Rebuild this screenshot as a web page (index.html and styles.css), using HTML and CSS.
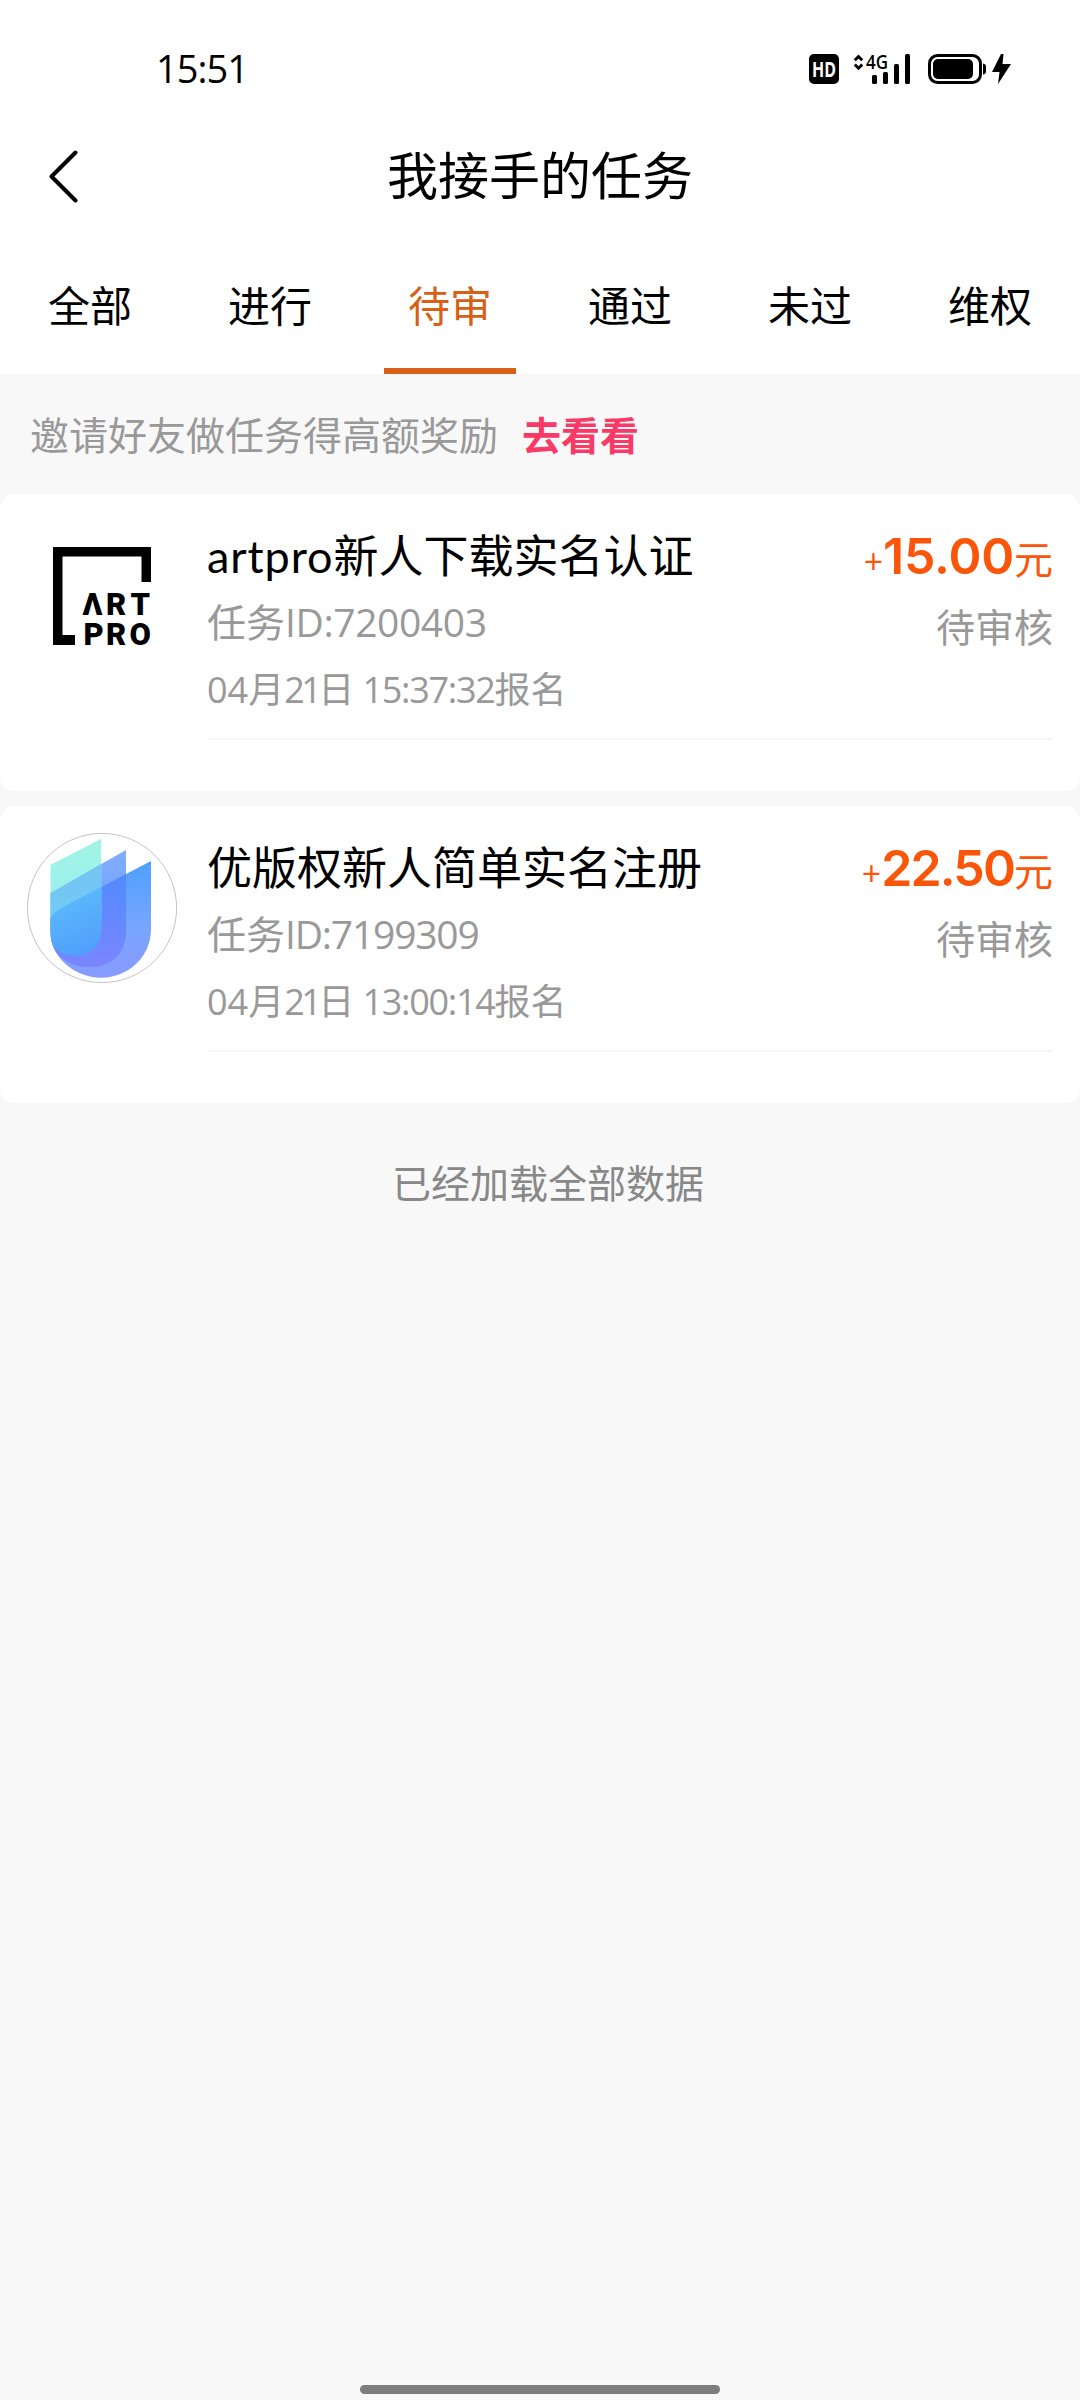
FILE: index.html
```html
<!DOCTYPE html>
<html lang="zh-CN">
<head>
<meta charset="utf-8">
<title>我接手的任务</title>
<link rel="stylesheet" href="styles.css">
</head>
<body>
<div class="screen">
  <header class="header">
    <div class="status">
      <span class="clock">15:51</span>
      <svg class="status-icons" width="204" height="52" viewBox="808 43 204 52" aria-hidden="true">
        <rect x="809" y="54" width="30" height="30" rx="5"/>
        <text class="hd" x="824" y="76.500" text-anchor="middle" textLength="24" lengthAdjust="spacingAndGlyphs">HD</text>
        <path class="line" d="M854.8 60.2l3.700-3.700 3.700 3.700M854.800 64.500l3.700 3.700 3.700-3.700"/>
        <text class="net" x="866" y="68.500" textLength="22" lengthAdjust="spacingAndGlyphs">4G</text>
        <rect x="872" y="75" width="5" height="9" rx="1.500"/>
        <rect x="883" y="72" width="5" height="12" rx="1.500"/>
        <rect x="894" y="64" width="5" height="20" rx="1.500"/>
        <rect x="905" y="54" width="5" height="30" rx="1.500"/>
        <rect class="line" x="929.500" y="55.500" width="51" height="27" rx="8"/>
        <rect x="933" y="59" width="40" height="20" rx="5"/>
        <path d="M983 63.500q3 .5 3 3v5q0 2.500-3 3z"/>
        <path d="M1001 54l-9 18h7.500l-1.500 12 13-20h-8.500l1-10z"/>
      </svg>
    </div>
    <div class="nav">
      <svg class="back" width="32" height="54" viewBox="0 0 32 54" aria-hidden="true"><path d="M28.500 3.500L4.500 27.500l24 24"/></svg>
      <h1 class="title">我接手的任务</h1>
    </div>
    <nav class="tabs">
      <a class="tab">全部</a>
      <a class="tab">进行</a>
      <a class="tab active">待审</a>
      <a class="tab">通过</a>
      <a class="tab">未过</a>
      <a class="tab">维权</a>
    </nav>
  </header>

  <div class="notice"><span>邀请好友做任务得高额奖励</span><a class="notice-link">去看看</a></div>

  <main class="list">
    <article class="card">
      <svg class="avatar" width="150" height="150" viewBox="0 0 150 150">
        <path d="M26 26h98v35h-9.500V35.500h-79V114H48v10H26z"/>
        <text class="logo-text" x="55.500 79 103.500" y="93.500">ΛRT</text>
        <text class="logo-text" x="56.500 79 102.500" y="123.500">PRO</text>
      </svg>
      <div class="body">
        <div class="info">
          <h2 class="name"><span class="latin">artpro</span>新人下载实名认证</h2>
          <p class="task-id">任务<span class="num id-a">ID:7200403</span></p>
          <p class="date"><span class="num">04</span>月<span class="num day">21</span>日 <span class="num time">15:37:32</span>报名</p>
        </div>
        <div class="reward">
          <p class="price"><span class="plus">+</span><b class="amount">15.00</b>元</p>
          <p class="state">待审核</p>
        </div>
      </div>
    </article>

    <article class="card">
      <svg class="avatar" width="150" height="150" viewBox="0 0 150 150" aria-hidden="true">
        <defs>
          <linearGradient id="outer" x1="0.600" y1="0" x2="0.700" y2="1"><stop offset="0" stop-color="#4c9fff"/><stop offset="0.550" stop-color="#76a6ff"/><stop offset="1" stop-color="#8b98ff"/></linearGradient>
          <linearGradient id="middle" x1="0" y1="0" x2="0" y2="1"><stop offset="0" stop-color="#7faeff"/><stop offset="1" stop-color="#789aff"/></linearGradient>
          <linearGradient id="core" x1="0" y1="0" x2="0" y2="1"><stop offset="0" stop-color="#4b8cff"/><stop offset="1" stop-color="#7d85ff"/></linearGradient>
          <linearGradient id="mint" x1="0" y1="0" x2="0" y2="1"><stop offset="0" stop-color="#a2f5e4"/><stop offset="1" stop-color="#98eeee"/></linearGradient>
          <linearGradient id="sky" x1="0" y1="0" x2="0" y2="1"><stop offset="0" stop-color="#74c3f4"/><stop offset="1" stop-color="#72cdf2"/></linearGradient>
          <linearGradient id="blue" x1="0" y1="0" x2="0.300" y2="1"><stop offset="0" stop-color="#5fc0fb"/><stop offset="1" stop-color="#509ffc"/></linearGradient>
          <clipPath id="shield"><path d="M23.300 0H124V96C124 124 101 144.700 74 144.700S23.300 124 23.300 98z"/></clipPath>
          <clipPath id="left"><path d="M23.300 32L74.200 5.700V96C74.200 114 63 123 47 123C38 123 30 119 23.300 109z"/></clipPath>
          <clipPath id="mid"><path d="M23.300 60L99 17V98C99 121 84 134 62 134C45 134 32 126 23.300 112z"/></clipPath>
        </defs>
        <circle cx="75" cy="75" r="74.600" fill="#fff" stroke="#aaa" stroke-width=".7"/>
        <g clip-path="url(#shield)">
          <path fill="url(#outer)" d="M23.300 85Q27 79 36 74L124 28V150H23.300z"/>
          <path fill="url(#middle)" d="M23.300 60L99 17V98L23.300 98z"/>
          <g clip-path="url(#mid)"><path fill="url(#core)" d="M23.300 85Q27 79 36 74L124 28V140H23.300z"/></g>
          <g clip-path="url(#left)">
            <path fill="url(#mint)" d="M23 0H75V85H23z"/>
            <path fill="url(#sky)" d="M23 60.200L75 30.600V100H23z"/>
            <path fill="url(#blue)" d="M23 85.500Q27 79 36 74L75 53.600V130H23z"/>
          </g>
        </g>
      </svg>
      <div class="body">
        <div class="info">
          <h2 class="name">优版权新人简单实名注册</h2>
          <p class="task-id">任务<span class="num id-b">ID:7199309</span></p>
          <p class="date"><span class="num">04</span>月<span class="num day">21</span>日 <span class="num time">13:00:14</span>报名</p>
        </div>
        <div class="reward">
          <p class="price"><span class="plus">+</span><b class="amount amount-b">22.50</b>元</p>
          <p class="state">待审核</p>
        </div>
      </div>
    </article>
  </main>

  <p class="end">已经加载全部数据</p>
  <div class="home-bar"></div>
</div>
</body>
</html>
```
FILE: styles.css
```css
* { box-sizing: border-box; margin: 0; padding: 0; }
body { background: #f8f8f8; color: #000; font-family: "Noto Sans CJK SC", sans-serif; font-weight: 400; }
.screen { width: 1080px; height: 2400px; display: flex; flex-direction: column; overflow: hidden; }
.num { font-family: "Open Sans", "Noto Sans", sans-serif; line-height: 1; }
.latin { font-family: Lato, sans-serif; line-height: 1; letter-spacing: .9px; }

.header { height: 374px; background: #fff; }
.status { height: 130px; padding: 43px 68px 0 156px; display: flex; justify-content: space-between; align-items: flex-start; }
.clock { font: 38px/50px "Open Sans", sans-serif; letter-spacing: -1px; }
.status-icons .line { fill: none; stroke: #000; stroke-width: 3; }
.hd { font: 700 21px "Open Sans", sans-serif; fill: #fff; }
.net { font: 600 20px "Open Sans", sans-serif; }

.nav { height: 92px; padding: 0 47px; display: grid; grid-template-columns: 32px 1fr 32px; align-items: center; }
.back path { fill: none; stroke: #000; stroke-width: 4; stroke-linecap: round; stroke-linejoin: round; }
.title { font-size: 51px; line-height: 86px; height: 92px; font-weight: 400; text-align: center; }

.tabs { height: 152px; display: grid; grid-template-columns: repeat(6, 180px); justify-items: center; }
.tab { width: 132px; height: 152px; font-size: 42px; line-height: 164px; text-align: center; }
.tab.active { color: #d95e16; border-bottom: 6px solid #d95e16; }

.notice { height: 120px; padding-left: 30px; display: flex; gap: 24px; font-size: 39px; line-height: 118px; color: #999; }
.notice-link { color: #f93a66; font-weight: 700; }

.list { display: flex; flex-direction: column; gap: 15px; }
.card { height: 297px; padding: 27px; display: flex; gap: 30px; align-items: flex-start; background: #fff; border-radius: 14px; }
.avatar { flex: none; }
.logo-text { font: 900 31px Roboto, sans-serif; }
.body { flex: 1; height: 219px; display: flex; justify-content: space-between; border-bottom: 2px solid #f6f6f6; }
.name { height: 66px; font-size: 45px; line-height: 66px; font-weight: 400; white-space: nowrap; }
.task-id { height: 67px; font-size: 39px; line-height: 66px; color: #999; }
.date { font-size: 36px; line-height: 66px; color: #999; white-space: nowrap; }
.day { letter-spacing: -3.500px; }
.id-a { letter-spacing: -.4px; }
.id-b { letter-spacing: -1.200px; }
.time { letter-spacing: -1.300px; }
.reward { text-align: right; color: #999; }
.price { height: 73px; font-size: 39px; line-height: 73px; color: #fa5508; white-space: nowrap; }
.plus { font-family: "Open Sans", sans-serif; font-size: 34px; line-height: 1; }
.amount { font: 600 50px/1 Inter, sans-serif; letter-spacing: -.2px; }
.amount-b { letter-spacing: -1.900px; }
.state { font-size: 39px; line-height: 62px; }

.end { padding: 44px 0 0 16px; font-size: 39px; line-height: 68px; text-align: center; color: #888; }
.home-bar { width: 360px; height: 9px; margin: auto auto 6px; border-radius: 5px; background: #7d7d7d; }
```
